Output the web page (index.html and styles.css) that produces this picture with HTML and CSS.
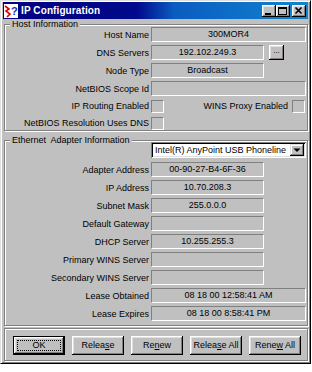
FILE: index.html
```html
<!DOCTYPE html>
<html>
<head>
<meta charset="utf-8">
<link rel="stylesheet" href="styles.css">
</head>
<body>
<div class="window">
  <div class="titlebar">
    <svg class="appicon" width="14" height="14" viewBox="0 0 14 14">
      <rect x="0" y="0" width="14" height="14" fill="#fff"/>
      <polyline points="1,2 5,5 2,7 6,10 3,13" fill="none" stroke="#e00000" stroke-width="1.6"/>
      <text x="7" y="11" font-family="Liberation Sans, Arial, sans-serif" font-weight="bold" font-size="11" fill="#1030c0">?</text>
    </svg>
    <span class="title">IP Configuration</span>
    <div class="controls">
      <span class="ctl"><svg width="14" height="12" viewBox="0 0 14 12"><rect x="3" y="8" width="6" height="2" fill="#000"/></svg></span>
      <span class="ctl"><svg width="14" height="12" viewBox="0 0 14 12"><rect x="2.5" y="2.5" width="8" height="7" fill="none" stroke="#000"/><rect x="2" y="2" width="9" height="2" fill="#000"/></svg></span>
      <span class="ctl close"><svg width="14" height="12" viewBox="0 0 14 12"><path d="M3.5 2.5 L9.5 8.5 M9.5 2.5 L3.5 8.5" stroke="#000" stroke-width="1.6"/></svg></span>
    </div>
  </div>

  <div class="group host">
    <span class="legend">Host Information</span>
    <div class="row"><span class="lbl">Host Name</span><span class="fld long">300MOR4</span></div>
    <div class="row"><span class="lbl">DNS Servers</span><span class="fld short">192.102.249.3</span><span class="more">...</span></div>
    <div class="row"><span class="lbl">Node Type</span><span class="fld short">Broadcast</span></div>
    <div class="row"><span class="lbl">NetBIOS Scope Id</span><span class="fld long"></span></div>
    <div class="row cbrow"><span class="lbl">IP Routing Enabled</span><span class="cb"></span><span class="lbl2">WINS Proxy Enabled</span><span class="cb last"></span></div>
    <div class="row cbrow"><span class="lbl">NetBIOS Resolution Uses DNS</span><span class="cb"></span></div>
  </div>

  <div class="group eth">
    <span class="legend">Ethernet&nbsp; Adapter Information</span>
    <div class="combo"><span class="combotext">Intel(R) AnyPoint USB Phoneline</span><span class="drop"><svg width="14" height="12" viewBox="0 0 14 12"><path d="M3.5 4.5 H10.5 L7 8 Z" fill="#000"/></svg></span></div>
    <div class="rows">
      <div class="row"><span class="lbl">Adapter Address</span><span class="fld short">00-90-27-B4-6F-36</span></div>
      <div class="row"><span class="lbl">IP Address</span><span class="fld short">10.70.208.3</span></div>
      <div class="row"><span class="lbl">Subnet Mask</span><span class="fld short">255.0.0.0</span></div>
      <div class="row"><span class="lbl">Default Gateway</span><span class="fld short"></span></div>
      <div class="row"><span class="lbl">DHCP Server</span><span class="fld short">10.255.255.3</span></div>
      <div class="row"><span class="lbl">Primary WINS Server</span><span class="fld short"></span></div>
      <div class="row"><span class="lbl">Secondary WINS Server</span><span class="fld short"></span></div>
      <div class="row"><span class="lbl">Lease Obtained</span><span class="fld long">08 18 00 12:58:41 AM</span></div>
      <div class="row"><span class="lbl">Lease Expires</span><span class="fld long">08 18 00 8:58:41 PM</span></div>
    </div>
  </div>

  <div class="buttons">
    <span class="btn default">OK</span>
    <span class="btn">Relea<u>s</u>e</span>
    <span class="btn">Re<u>n</u>ew</span>
    <span class="btn">Relea<u>s</u>e All</span>
    <span class="btn">Rene<u>w</u> All</span>
  </div>
</div>
</body>
</html>
```

FILE: styles.css
```css
html, body {
  margin: 0;
  padding: 0;
  background: #fff;
}

body {
  font-family: "Liberation Sans", Arial, sans-serif;
  font-size: 9px;
  color: #000;
}

.window {
  width: 311px;
  height: 364px;
  box-sizing: border-box;
  background: #c0c0c0;
  border: 1px solid;
  border-color: #dfdfdf #000 #000 #dfdfdf;
  box-shadow: inset 1px 1px #fff, inset -1px -1px #808080;
  padding: 1px 2px 2px;
}

.titlebar {
  height: 17px;
  display: flex;
  align-items: center;
  background: linear-gradient(90deg, #000080 0%, #000a8c 44%, #0a5cc0 56%, #1084d0 100%);
  color: #fff;
}

.appicon {
  display: block;
  margin-left: 1px;
}

.title {
  font-weight: bold;
  font-size: 10px;
  margin-left: 3px;
  letter-spacing: 0.1px;
}

.controls {
  margin-left: auto;
  margin-right: 2px;
  display: flex;
}

.ctl {
  width: 14px;
  height: 12px;
  display: block;
  background: #c0c0c0;
  box-shadow: inset -1px -1px #000, inset 1px 1px #fff, inset -2px -2px #808080, inset 2px 2px #dfdfdf;
}

.ctl svg {
  display: block;
}

.ctl.close {
  margin-left: 2px;
}

.group {
  position: relative;
  margin-left: 1px;
  border: 1px solid #808080;
  box-shadow: inset 1px 1px #fff, 1px 1px #fff;
  display: flex;
  flex-direction: column;
}

.legend {
  position: absolute;
  left: 5px;
  top: -6px;
  padding: 0 2px;
  line-height: 10px;
  background: #c0c0c0;
}

.host {
  margin-top: 5px;
  padding: 2px 0 0;
  gap: 3px;
}

.eth {
  margin-top: 9px;
  padding: 1px 0 4px;
}

.rows {
  display: flex;
  flex-direction: column;
  gap: 3px;
  margin-top: 4px;
}

.row {
  height: 15px;
  display: flex;
  align-items: center;
}

.row.cbrow {
  height: 14px;
}

.lbl {
  width: 144px;
  margin-right: 2px;
  text-align: right;
  white-space: nowrap;
}

.fld {
  box-sizing: border-box;
  height: 15px;
  border: 1px solid;
  border-color: #808080 #fff #fff #808080;
  background: #c0c0c0;
  text-align: center;
  line-height: 13px;
  white-space: nowrap;
}

.fld.long {
  width: 155px;
}

.fld.short {
  width: 113px;
}

.more {
  box-sizing: border-box;
  width: 15px;
  height: 15px;
  margin-left: 5px;
  background: #c0c0c0;
  box-shadow: inset -1px -1px #000, inset 1px 1px #fff, inset -2px -2px #808080, inset 2px 2px #dfdfdf;
  text-align: center;
  line-height: 12px;
  font-size: 8px;
}

.cb {
  box-sizing: border-box;
  width: 13px;
  height: 13px;
  border: 1px solid;
  border-color: #808080 #fff #fff #808080;
  background: #c0c0c0;
}

.lbl2 {
  margin-left: auto;
  margin-right: 4px;
  white-space: nowrap;
}

.cb.last {
  margin-right: 2px;
}

.combo {
  box-sizing: border-box;
  width: 155px;
  height: 16px;
  margin-left: 146px;
  background: #fff;
  box-shadow: inset 1px 1px #808080, inset -1px -1px #fff, inset 2px 2px #000, inset -2px -2px #dfdfdf;
  display: flex;
  align-items: center;
  padding: 2px;
}

.combotext {
  flex: 1;
  padding-left: 2px;
  white-space: nowrap;
  overflow: hidden;
  line-height: 12px;
}

.drop {
  width: 14px;
  height: 12px;
  display: block;
  background: #c0c0c0;
  box-shadow: inset -1px -1px #000, inset 1px 1px #dfdfdf, inset -2px -2px #808080, inset 2px 2px #fff;
}

.drop svg {
  display: block;
}

.buttons {
  margin-top: 2px;
  margin-left: 1px;
  border: 1px solid #808080;
  box-shadow: inset 1px 1px #fff, 1px 1px #fff;
  padding: 7px 0 5px 8px;
  display: flex;
  gap: 7px;
}

.btn {
  box-sizing: border-box;
  width: 52px;
  height: 19px;
  display: block;
  text-align: center;
  line-height: 19px;
  background: #c0c0c0;
  box-shadow: inset -1px -1px #000, inset 1px 1px #fff, inset -2px -2px #808080, inset 2px 2px #dfdfdf;
  white-space: nowrap;
}

.btn.default {
  border: 1px solid #000;
  line-height: 17px;
  outline: 1px dotted #000;
  outline-offset: -5px;
}
```
